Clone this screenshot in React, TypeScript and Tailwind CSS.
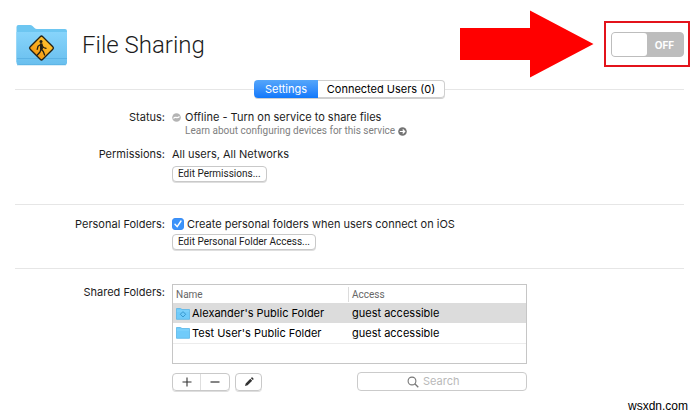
import type { ReactNode } from "react";

function Row({ label, children }: { label: ReactNode; children: ReactNode }) {
  return (
    <div className="flex gap-[7px]">
      <div className="w-[150px] shrink-0 text-right leading-4">{label}</div>
      <div className="min-w-0">{children}</div>
    </div>
  );
}

function Divider() {
  return <hr className="border-0 border-t border-[#e6e6e6]" />;
}

function LargeFolder() {
  return (
    <svg viewBox="0 0 52 42" className="h-[42px] w-[52px] shrink-0" aria-hidden="true">
      <defs>
        <linearGradient id="folder" x1="0" y1="0" x2="0" y2="1">
          <stop offset="0" stopColor="#87d4fb" />
          <stop offset="1" stopColor="#69bfee" />
        </linearGradient>
        <linearGradient id="sign" x1="0" y1="0" x2="0" y2="1">
          <stop offset="0" stopColor="#ffc02e" />
          <stop offset="1" stopColor="#f59a12" />
        </linearGradient>
      </defs>
      <path d="M.5 3Q.5 1 2.500 1H14q1.500 0 2.500 1l2 2q1 1 2.500 1H49q2 0 2 2v31H.5Z" fill="#6dc6f1" />
      <path d="M.5 8H51v30.500q0 2.500-2.500 2.500H3Q.5 41 .5 38.500Z" fill="url(#folder)" />
      <path d="M1 34.500H51M1 40.800H50" stroke="#55ace0" strokeWidth=".7" />
      <rect x="16.600" y="15.100" width="17.800" height="17.800" rx="1.800" transform="rotate(45 25.500 24)" fill="url(#sign)" stroke="#242015" strokeWidth="1.300" />
      <circle cx="25" cy="17.500" r="1.500" fill="#242015" />
      <path d="M25 20v5.500M25 20.300l-3 2-.8 3M25.500 20.500l2 3 2.500.8M25 25l-1 3-2.700 3M25 25l2.300 2.500 1.300 3.500" fill="none" stroke="#242015" strokeWidth="1.300" strokeLinecap="round" strokeLinejoin="round" />
      <path d="M24 19.500h2.500l.5 6h-3Z" fill="#242015" />
    </svg>
  );
}

function SmallFolder({ badge }: { badge?: boolean }) {
  return (
    <svg viewBox="0 0 14 13" className="h-[13px] w-[14px] shrink-0" aria-hidden="true">
      <path d="M.5 1.500h4l1.500 1h7.500v9.800H.5Z" fill="#70cbfa" stroke="#59b5e6" strokeWidth=".8" />
      <path d="M.8 4h12.400" stroke="#8bd8fd" strokeWidth=".8" />
      {badge && <path d="m7 4.600 2.700 2.700L7 10 4.300 7.300Z" fill="#70cbfa" stroke="#3293c9" strokeWidth=".9" />}
    </svg>
  );
}

const pushButton =
  "block h-4 rounded-[4px] border border-[#c9c9c9] bg-white px-[5px] font-['Roboto','Liberation_Sans',sans-serif] text-[10px] leading-[14px] shadow-[0_1px_0_#dedede]";

const folders = [
  { name: "Alexander's Public Folder", access: "guest accessible", selected: true },
  { name: "Test User's Public Folder", access: "guest accessible", selected: false },
];

export default function App() {
  return (
    <div className="bg-white font-['Inter','Liberation_Sans',sans-serif] text-[11px] text-[#1c1c1c]">
      <header className="flex h-20 items-start pt-[10px] pr-[10px] pl-4">
        <div className="mt-[14px] flex items-center gap-[14px]">
          <LargeFolder />
          <h1 className="font-['Roboto','Liberation_Sans',sans-serif] text-[24px] leading-[42px] font-light">File Sharing</h1>
        </div>
        <svg viewBox="0 0 134 68" className="ml-auto h-[68px] w-[134px] shrink-0" aria-hidden="true">
          <path d="M0 18H70V.500L133.500 34 70 67.500V50H0Z" fill="#f00" />
        </svg>
        <div className="mt-[11px] ml-[10px] flex h-[46px] w-[86px] shrink-0 items-center justify-center border-2 border-[#e3131b]">
          <button
            type="button"
            role="switch"
            aria-checked="false"
            aria-label="File Sharing"
            className="flex h-[25px] w-[73px] rounded-[4px] border border-[#bdbdbd] bg-[#bdbdbd] text-[10px] leading-[24px] font-bold text-white"
          >
            <span className="h-[23px] w-[35px] rounded-[3px] bg-white" />
            <span className="flex-1 text-center">OFF</span>
          </button>
        </div>
      </header>

      <main className="pr-4 pl-[15px]">
        <div className="flex items-center">
          <div className="flex-1"><Divider /></div>
          <div className="flex h-[18px] rounded-[4px] shadow-[0_1px_0_#cfcfcf]" role="tablist">
            <button type="button" role="tab" aria-selected="true" className="w-16 rounded-l-[4px] bg-linear-to-b from-[#55a6fa] to-[#0f78fb] text-white">
              Settings
            </button>
            <button type="button" role="tab" aria-selected="false" className="w-[127px] rounded-r-[4px] border border-l-0 border-[#cfcfcf] bg-white text-black">
              Connected Users (0)
            </button>
          </div>
          <div className="flex-1"><Divider /></div>
        </div>

        <section className="flex flex-col gap-[9px] pt-[11px] pb-[22px]">
          <Row label="Status:">
            <div className="flex items-center gap-1 leading-4">
              <svg viewBox="0 0 9 9" className="size-[9px]" aria-hidden="true">
                <circle cx="4.500" cy="4.500" r="4.300" fill="#b4b4b4" />
                <path d="M1.500 5.500C3.500 2.500 4.500 6.500 7.500 3.500" fill="none" stroke="#fff" strokeWidth="1.300" />
              </svg>
              Offline - Turn on service to share files
            </div>
            <a href="#learn" className="ml-[13px] flex items-center gap-[3px] font-['Roboto','Liberation_Sans',sans-serif] text-[10px] leading-3 text-[#808080]">
              Learn about configuring devices for this service
              <svg viewBox="0 0 9 9" className="size-[9px]" aria-hidden="true">
                <circle cx="4.500" cy="4.500" r="4.300" fill="#747474" />
                <path d="M1.800 4.500h4.800M4.700 2.500l2 2-2 2" fill="none" stroke="#fff" strokeWidth="1.200" />
              </svg>
            </a>
          </Row>
          <Row label="Permissions:">
            <p className="leading-4">All users, All Networks</p>
            <button type="button" className={`${pushButton} mt-1`}>Edit Permissions...</button>
          </Row>
        </section>
        <Divider />
        <section className="pt-[11px] pb-[18px]">
          <Row label="Personal Folders:">
            <label className="flex items-center gap-[3px] leading-4">
              <span className="grid">
                <input type="checkbox" defaultChecked className="peer col-start-1 row-start-1 size-3 appearance-none rounded-[3px] border border-[#3b8df5] bg-white checked:bg-[#3b93fa]" />
                <svg viewBox="0 0 12 12" className="pointer-events-none col-start-1 row-start-1 hidden size-3 peer-checked:block" aria-hidden="true">
                  <path d="m3 6.300 2.200 2.400L9 3" fill="none" stroke="#fff" strokeWidth="1.400" strokeLinecap="round" />
                </svg>
              </span>
              Create personal folders when users connect on iOS
            </label>
            <button type="button" className={`${pushButton} mt-[2px]`}>Edit Personal Folder Access...</button>
          </Row>
        </section>
        <Divider />
        <section className="pt-[15px]">
          <Row label="Shared Folders:">
            <div className="h-20 w-[355px] border border-[#c6c6c6]">
              <table className="w-full table-fixed border-collapse text-left text-black">
                <thead>
                  <tr className="h-[18px] font-['Roboto','Liberation_Sans',sans-serif] text-[10px] text-[#666]">
                    <th className="w-[175px] p-0 pl-[3px] font-normal">Name</th>
                    <th className="p-0 font-normal">
                      <div className="border-l border-[#dcdcdc] pl-[3px]">Access</div>
                    </th>
                  </tr>
                </thead>
                <tbody>
                  {folders.map((f) => (
                    <tr key={f.name} className={f.selected ? "h-5 bg-[#dcdcdc]" : "h-5 border-b border-[#ececec]"}>
                      <td className="p-0 pl-[3px]">
                        <div className="flex items-center gap-[2px] whitespace-nowrap">
                          <SmallFolder badge={f.selected} />
                          {f.name}
                        </div>
                      </td>
                      <td className="p-0 pl-1">{f.access}</td>
                    </tr>
                  ))}
                </tbody>
              </table>
            </div>
            <div className="mt-2 flex w-[355px] items-center">
              <div className="flex h-[18px] rounded-[4px] border border-[#c9c9c9] shadow-[0_1px_0_#dedede]">
                <button type="button" aria-label="Add folder" className="grid w-7 place-items-center border-r border-[#dedede]">
                  <svg viewBox="0 0 10 10" className="size-[10px]"><path d="M.5 5h9M5 .5v9" stroke="#333" strokeWidth="1.100" /></svg>
                </button>
                <button type="button" aria-label="Remove folder" className="grid w-7 place-items-center">
                  <svg viewBox="0 0 10 10" className="size-[10px]"><path d="M.5 5h9" stroke="#333" strokeWidth="1.200" /></svg>
                </button>
              </div>
              <button type="button" aria-label="Edit folder" className="ml-[5px] grid h-[18px] w-[27px] place-items-center rounded-[4px] border border-[#c9c9c9] shadow-[0_1px_0_#dedede]">
                <svg viewBox="0 0 10 10" className="size-[10px]"><path d="m1 9 .7-2.600 4.600-4.600 1.900 1.900-4.600 4.600ZM6.900 1.200l.6-.6q.5-.5 1 0l.9.9q.5.5 0 1l-.6.6Z" fill="#333" /></svg>
              </button>
              <label className="ml-auto flex h-[19px] w-[170px] items-center gap-1 rounded-[4px] border border-[#cbcbcb] pl-[49px]">
                <svg viewBox="0 0 12 12" className="size-3 shrink-0" aria-hidden="true">
                  <circle cx="5" cy="5" r="3.900" fill="none" stroke="#777" strokeWidth="1.100" />
                  <path d="m7.800 7.800 3.500 3.500" stroke="#777" strokeWidth="1.300" />
                </svg>
                <input type="search" aria-label="Search" placeholder="Search" className="w-full min-w-0 bg-transparent outline-none placeholder:text-[#b9b9b9]" />
              </label>
            </div>
          </Row>
        </section>
      </main>
      <footer className="mt-2 pr-3 text-right font-['Liberation_Sans',sans-serif] text-[12px] leading-[14px] text-black">wsxdn.com</footer>
    </div>
  );
}
